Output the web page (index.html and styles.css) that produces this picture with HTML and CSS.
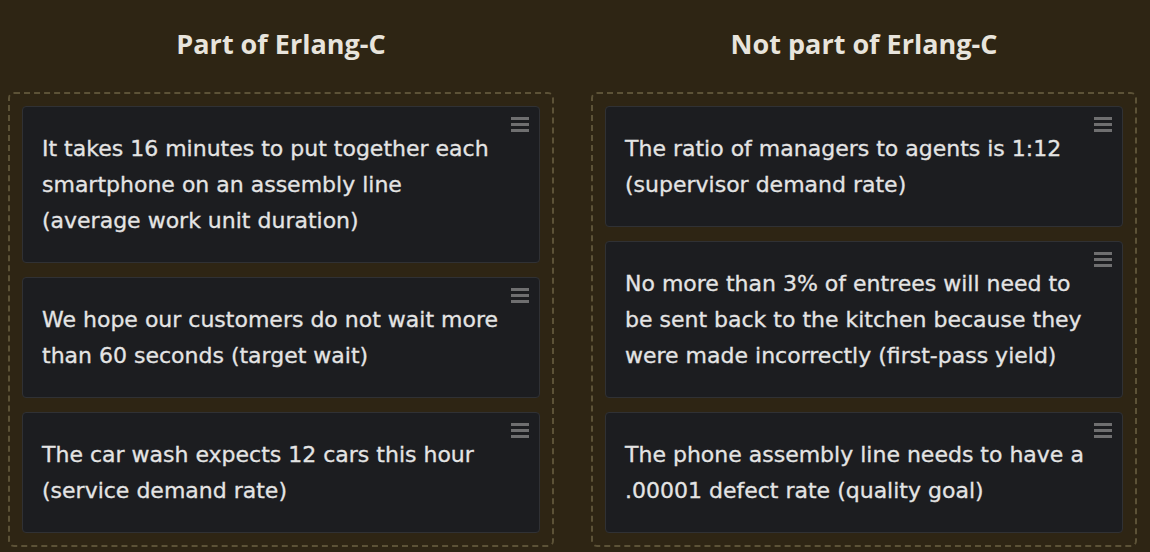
FILE: index.html
```html
<!DOCTYPE html>
<html>
<head>
<meta charset="utf-8">
<link rel="stylesheet" href="styles.css">
</head>
<body>
<div class="board">
  <section class="column">
    <h2 class="title">Part of Erlang-C</h2>
    <div class="zone">
      <div class="card"><span class="handle"><i></i><i></i><i></i></span><p>It takes 16 minutes to put together each<br>smartphone on an assembly line<br>(average work unit duration)</p></div>
      <div class="card"><span class="handle"><i></i><i></i><i></i></span><p>We hope our customers do not wait more<br>than 60 seconds (target wait)</p></div>
      <div class="card"><span class="handle"><i></i><i></i><i></i></span><p>The car wash expects 12 cars this hour<br>(service demand rate)</p></div>
    </div>
  </section>
  <section class="column">
    <h2 class="title">Not part of Erlang-C</h2>
    <div class="zone">
      <div class="card"><span class="handle"><i></i><i></i><i></i></span><p>The ratio of managers to agents is 1:12<br>(supervisor demand rate)</p></div>
      <div class="card"><span class="handle"><i></i><i></i><i></i></span><p>No more than 3% of entrees will need to<br>be sent back to the kitchen because they<br>were made incorrectly (first-pass yield)</p></div>
      <div class="card"><span class="handle"><i></i><i></i><i></i></span><p>The phone assembly line needs to have a<br>.00001 defect rate (quality goal)</p></div>
    </div>
  </section>
</div>
</body>
</html>
```
FILE: styles.css
```css
html, body {
  margin: 0;
  padding: 0;
  background: #2e2514;
}
body {
  padding: 8px;
  font-family: "Open Sans", "Noto Sans", sans-serif;
  color: #e4e4e4;
}
.board {
  display: grid;
  grid-template-columns: 546px 546px;
  column-gap: 37px;
}
.title {
  margin: 0;
  padding: 16px 0 28px;
  line-height: 40px;
  font-size: 27px;
  font-weight: 700;
  text-align: center;
  color: #e8e4dc;
}
.zone {
  border: 2px dashed #5c5237;
  border-radius: 6px;
  padding: 12px;
  display: flex;
  flex-direction: column;
  gap: 14px;
}
.card {
  position: relative;
  background: #1c1d20;
  border: 1px solid #303134;
  border-radius: 4px;
  padding: 24px 19px 23px;
}
.card p {
  margin: 0;
  font-family: "DejaVu Sans", "Open Sans", sans-serif;
  font-size: 22px;
  line-height: 36px;
  white-space: nowrap;
  -webkit-text-stroke: 0.3px currentColor;
}
.handle {
  position: absolute;
  top: 10px;
  right: 10px;
  width: 18px;
  display: flex;
  flex-direction: column;
  gap: 3px;
}
.handle i {
  display: block;
  height: 3px;
  background: #6f6f70;
}
```
